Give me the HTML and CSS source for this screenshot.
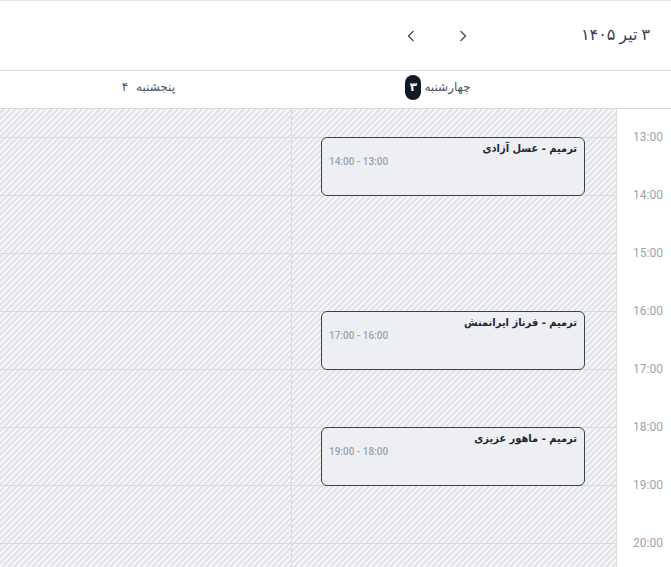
FILE: index.html
```html
<!DOCTYPE html>
<html lang="fa" dir="rtl">
<head>
<meta charset="utf-8">
<title>تقویم</title>
<link rel="stylesheet" href="styles.css">
</head>
<body>
<div class="cal">
  <header class="topbar">
    <h1 class="title">۳ تیر ۱۴۰۵</h1>
    <div class="nav">
      <button class="nav-btn" aria-label="قبلی"><svg width="8" height="12" viewBox="0 0 8 12"><path d="M2 1.5 6.5 6 2 10.5" fill="none" stroke="#4b5563" stroke-width="1.5" stroke-linecap="round" stroke-linejoin="round"/></svg></button>
      <button class="nav-btn" aria-label="بعدی"><svg width="8" height="12" viewBox="0 0 8 12"><path d="M6 1.5 1.5 6 6 10.5" fill="none" stroke="#4b5563" stroke-width="1.5" stroke-linecap="round" stroke-linejoin="round"/></svg></button>
    </div>
  </header>

  <div class="dayhead">
    <div class="dh-gutter"></div>
    <div class="dh-day"><span class="dh-name">چهارشنبه</span><span class="dh-num today">۳</span></div>
    <div class="dh-day"><span class="dh-name">پنجشنبه</span><span class="dh-num">۴</span></div>
  </div>

  <div class="body">
    <div class="times">
      <div class="time"><span>13:00</span></div>
      <div class="time"><span>14:00</span></div>
      <div class="time"><span>15:00</span></div>
      <div class="time"><span>16:00</span></div>
      <div class="time"><span>17:00</span></div>
      <div class="time"><span>18:00</span></div>
      <div class="time"><span>19:00</span></div>
      <div class="time"><span>20:00</span></div>
    </div>

    <div class="col col-wed">
      <div class="slot half"></div>
      <div class="slot"></div><div class="slot"></div><div class="slot"></div><div class="slot"></div>
      <div class="slot"></div><div class="slot"></div><div class="slot"></div><div class="slot"></div>

      <div class="event" style="top:28px">
        <div class="ev-title">ترمیم - عسل آزادی</div>
        <div class="ev-time">13:00 - 14:00</div>
      </div>
      <div class="event" style="top:202px">
        <div class="ev-title">ترمیم - فرناز ایرانمنش</div>
        <div class="ev-time">16:00 - 17:00</div>
      </div>
      <div class="event" style="top:318px">
        <div class="ev-title">ترمیم - ماهور عزیزی</div>
        <div class="ev-time">18:00 - 19:00</div>
      </div>
    </div>

    <div class="col col-thu">
      <div class="slot half"></div>
      <div class="slot"></div><div class="slot"></div><div class="slot"></div><div class="slot"></div>
      <div class="slot"></div><div class="slot"></div><div class="slot"></div><div class="slot"></div>
    </div>
  </div>
</div>
</body>
</html>
```

FILE: styles.css
```css
* { box-sizing: border-box; }

html, body {
  margin: 0;
  padding: 0;
  background: #ffffff;
}

body {
  font-family: Roboto, "DejaVu Sans", sans-serif;
  color: #374151;
  overflow: hidden;
}

.cal {
  width: 671px;
  height: 567px;
  overflow: hidden;
}

/* top bar */
.topbar {
  height: 71px;
  border-top: 1px solid #e5e7eb;
  border-bottom: 1px solid #d9dbe0;
  display: flex;
  align-items: center;
  padding-right: 21px;
}

.title {
  margin: 0;
  font-size: 16px;
  font-weight: 500;
  color: #374151;
  line-height: 20px;
  padding-bottom: 1px;
}

.nav {
  display: flex;
  gap: 24px;
  margin-right: 104px;
}

.nav-btn {
  width: 28px;
  height: 28px;
  padding: 0;
  border: 0;
  background: transparent;
  display: flex;
  align-items: center;
  justify-content: center;
}

/* day header */
.dayhead {
  height: 38px;
  display: flex;
  padding-bottom: 5px;
  border-bottom: 1px solid #d9dbe0;
}

.dh-gutter { width: 87px; }

.dh-day {
  width: 292px;
  display: flex;
  align-items: center;
  justify-content: center;
  gap: 3px;
}

.dh-name {
  font-size: 12px;
  color: #4b5563;
}

.dh-num {
  width: 16px;
  height: 25px;
  border-radius: 8px;
  display: flex;
  align-items: center;
  justify-content: center;
  font-size: 12px;
  color: #4b5563;
}

.dh-num.today {
  background: #111827;
  color: #ffffff;
  font-weight: 700;
}

/* grid body */
.body {
  display: flex;
  height: 459px;
}

.times {
  width: 55px;
  border-left: 1px solid #d9dbe0;
  padding-top: 28px;
  background: #ffffff;
}

.time {
  display: flow-root;
  height: 58px;
  padding-right: 8px;
}

.time span {
  display: block;
  margin-top: -7px;
  line-height: 14px;
  font-size: 12px;
  color: #9ca3af;
  text-align: right;
}

.col {
  position: relative;
  background-color: #f5f6f8;
  background-image: linear-gradient(135deg,
    #f5f6f8 0 25%, #e2e4e8 25% 50%,
    #f5f6f8 50% 75%, #e2e4e8 75% 100%);
  background-size: 6px 6px;
}

.col-wed {
  width: 325px;
  border-left: 1px solid #d9dbe0;
}

.col-thu { flex: 1; }

.slot {
  height: 58px;
  border-bottom: 1px solid #d9dbe0;
}

.slot.half { height: 29px; }

/* events */
.event {
  position: absolute;
  left: 29px;
  right: 31px;
  height: 59px;
  background: #eeeff3;
  border: 1px solid #374151;
  border-radius: 6px;
  padding: 4px 7px 0;
}

.ev-title {
  font-family: "DejaVu Sans Condensed", "DejaVu Sans", sans-serif;
  font-size: 11px;
  font-weight: 700;
  line-height: 14px;
  color: #1f2937;
  text-align: right;
}

.ev-time {
  font-size: 10px;
  font-weight: 500;
  line-height: 10px;
  margin-top: 1px;
  color: #9ca3af;
  text-align: left;
}
```
